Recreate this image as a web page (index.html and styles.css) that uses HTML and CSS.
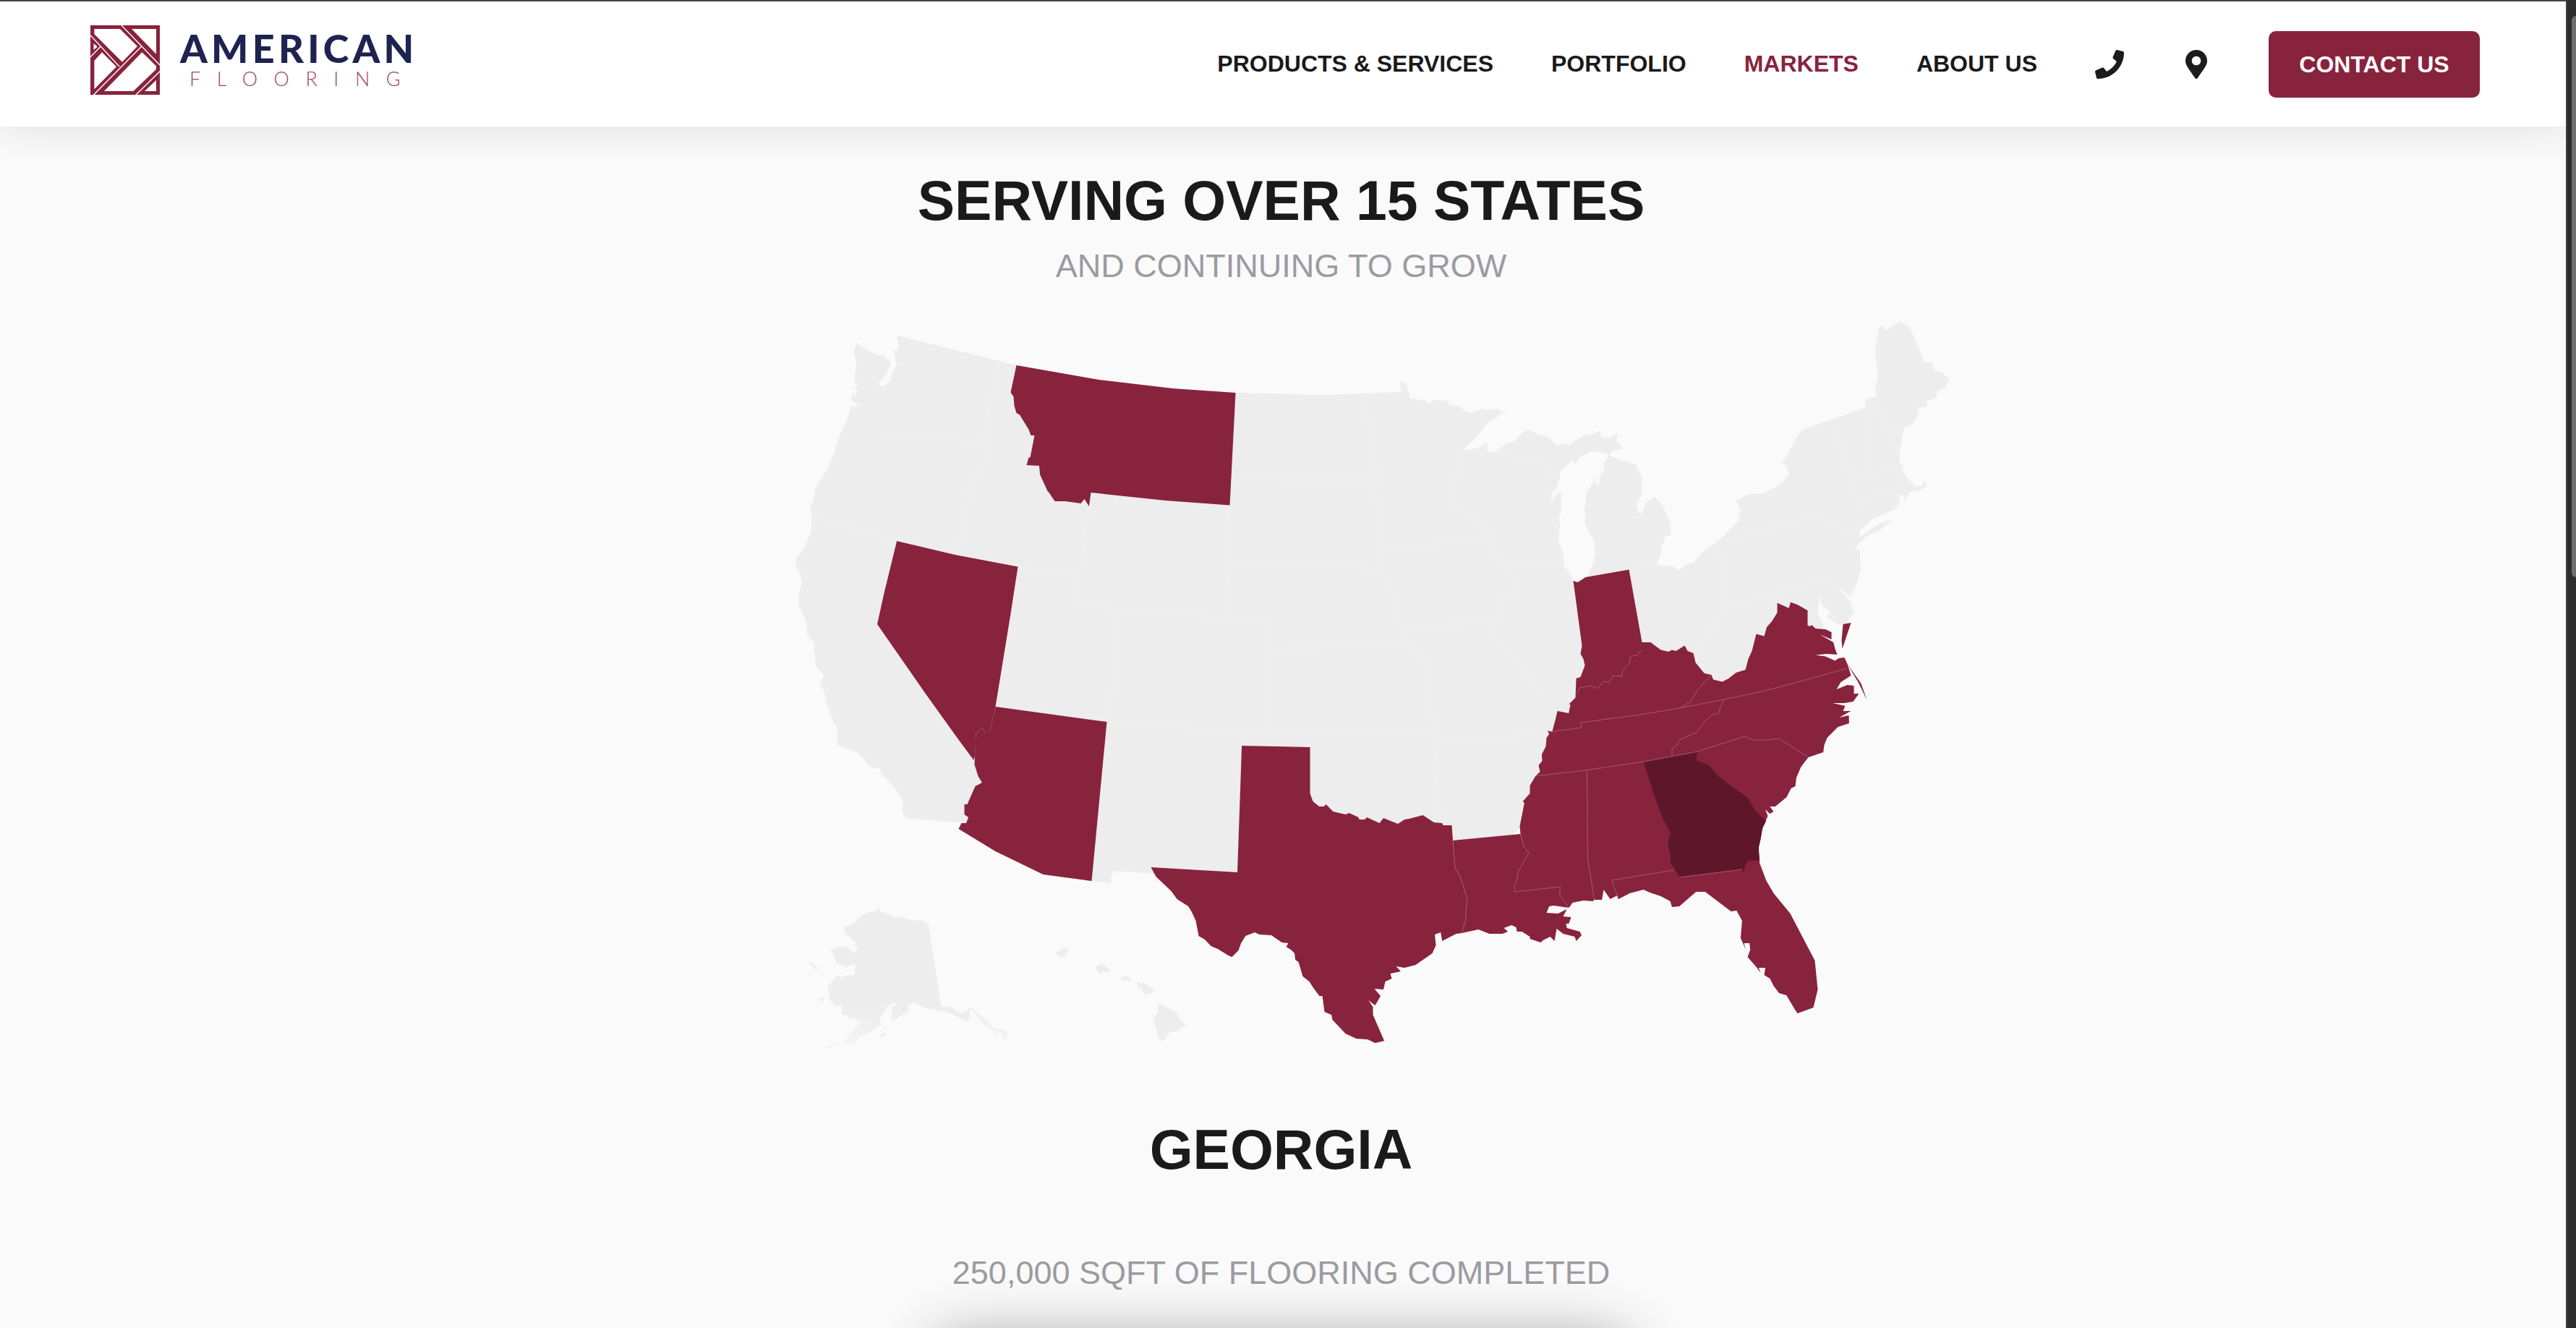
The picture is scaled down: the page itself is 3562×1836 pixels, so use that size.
FILE: index.html
```html
<!DOCTYPE html>
<html lang="en">
<head>
    <meta charset="UTF-8">
    <meta name="viewport" content="width=device-width, initial-scale=1.0">
    <title>American Flooring - Markets</title>
    <link rel="stylesheet" href="styles.css">
</head>
<body>
<div class="window">
    <div class="page">
        <header class="site-header">
            <a class="logo" href="#">
                <svg class="logo-mark" viewBox="0 0 96 96">
                    <rect class="logo-bg" width="96" height="96"/>
                    <polygon class="logo-cut" points="5.4,5 41,5 65,29 44,50.7 5.4,12.3"/>
                    <polygon class="logo-cut" points="57,5 91,5 91,39.7"/>
                    <polygon class="logo-cut" points="4.5,25 9.8,29.7 4.5,34"/>
                    <polygon class="logo-cut" points="5.4,49 16,37.3 36,57.3 5.4,88.3"/>
                    <polygon class="logo-cut" points="71.4,37.3 91,56.3 91,60.7 59.4,91 19,91"/>
                    <polygon class="logo-cut" points="91,75.7 91,91 75,91"/>
                    <path class="logo-line" d="M43 0L96 55M0 13.7L40 57M0 43.7L14.7 28.7M71 28.7L4.6 96M96 63.7L63 96"/>
                </svg>
                <span class="logo-text">
                    <span class="logo-name">AMERICAN</span>
                    <span class="logo-sub">FLOORING</span>
                </span>
            </a>
            <nav class="main-nav">
                <a href="#">PRODUCTS &amp; SERVICES</a>
                <a href="#">PORTFOLIO</a>
                <a class="active" href="#">MARKETS</a>
                <a href="#">ABOUT US</a>
                <a class="nav-icon" href="#" aria-label="Phone">
                    <svg viewBox="0 0 512 512" width="40" height="40"><path d="M493.4 24.6l-104-24c-11.3-2.6-22.9 3.3-27.5 13.9l-48 112c-4.2 9.8-1.4 21.3 6.9 28l60.6 49.6c-36 76.7-98.9 140.5-177.2 177.2l-49.6-60.6c-6.8-8.3-18.2-11.1-28-6.9l-112 48C3.9 366.5-2 378.1.6 389.4l24 104C27.1 504.2 36.7 512 48 512c256.1 0 464-207.5 464-464 0-11.2-7.7-20.9-18.6-23.4z"/></svg>
                </a>
                <a class="nav-icon" href="#" aria-label="Location">
                    <svg viewBox="0 0 384 512" width="30" height="40"><path d="M172.268 501.67C26.97 291.031 0 262.413 0 192 0 85.961 85.961 0 192 0s192 85.961 192 192c0 70.413-26.97 99.031-172.268 309.67-9.535 13.774-29.93 13.773-39.464 0zM192 272c44.183 0 80-35.817 80-80s-35.817-80-80-80-80 35.817-80 80 35.817 80 80 80z"/></svg>
                </a>
                <a class="contact-btn" href="#">CONTACT US</a>
            </nav>
        </header>

        <main class="markets">
            <h1>SERVING OVER 15 STATES</h1>
            <p class="subtitle">AND CONTINUING TO GROW</p>

            <svg class="us-map" viewBox="845.5 440 1852 1040">
                <defs>
                    <linearGradient id="alaska-fade" gradientUnits="userSpaceOnUse" x1="0" y1="1400" x2="0" y2="1462">
                        <stop offset="0" stop-color="#ededed"/>
                        <stop offset="1" stop-color="#f7f7f7"/>
                    </linearGradient>
                </defs>

                <!-- lower 48, lake michigan is a hole -->
                <path class="land" d="M1240 464L1381 499L1405 505L1519 525L1621 537L1708 543L1825 546L1860 545L1936 542L1936 527L1944 530L1950 551L1971 554L1974 558L1986 552L2003 555L2001.5 559L2008 561L2017 561L2022 566L2034 571L2050 565L2053 567L2070 565L2075 569L2084 567L2071 576L2056 585L2041 604L2022 623L2041 620L2056 611L2056 624L2067 625L2084 612L2093 610L2111 593L2123 599L2140 604L2153 616L2159 613L2170 615L2189 602L2200 601L2211 595L2214 605L2223 606L2236 600L2235 611L2241 615L2243 621L2229 623L2225 630L2242 636L2261 642L2270 660L2270 682.5L2263 697L2264 708.5L2270 710L2275 695L2288 687L2298 698L2309 724L2310 741L2303 741L2296 757.5L2296 768L2290 781L2312.5 783L2321 788L2333 780L2341.5 778L2351 766L2373 750L2388 736L2403 720L2406 704L2400 693L2417 683L2439 682L2463 668L2473 656L2470 644L2463 641L2474 623.5L2482.5 606L2492 594L2532 580L2578.5 563.5L2580 551L2594 548.5L2592 537L2597 520L2592 486L2598 452L2603 450L2607 457L2626 445L2640 452L2658 493L2659 500L2671 501L2674.5 512L2685.5 515L2695 523.5L2689 536L2678 541.5L2677 550L2663.5 555L2664.6 562L2653 563.5L2650 577L2643 587L2633 591L2629.5 604L2628 616L2626 627L2627 642L2633 643L2628 648.5L2639 663L2649 673.5L2658 670L2660 663.5L2665 672L2651.5 679L2641.6 680L2633 691.5L2630.6 684L2626 684L2626 697L2617 705.7L2589.5 717L2571 734L2570 743L2598 724L2620 716L2598 734L2581 741L2567.6 754L2565 759L2571 760L2572.5 786L2567.6 804L2564 814.6L2558 825L2537 809L2558 831L2562.6 847L2552 863L2540 863L2525 852L2532 847L2518 836L2515 823.5L2513 848.5L2521 863L2510 900L2450 1000L2150 1090L2110 1140L2050 1180L1800 1230L1596 1208L1542 1204L1537 1208L1535.5 1221L1509 1218L1400 1120L1335.5 1138L1253 1131L1247 1123L1248 1107L1237 1090L1226 1077L1220 1073L1215.6 1063L1205 1061L1198 1057L1195 1050L1186 1041L1157 1030L1157 1003L1153 1002L1144 977L1139 956L1133 944L1139 933.5L1128 921L1125 898.5L1126 890L1115 877L1115 860L1103 836L1105 818L1108.5 806L1105 791L1099 781L1100 773L1112.5 756L1121 734L1122 715L1120 704L1125 690L1126 677L1133 665L1143 650L1153 626L1158.5 607.5L1171 579L1176 562L1182 563L1186.5 561L1195 566L1176 553L1180 541L1181 550L1185 538L1180 536L1187.6 531L1181 530L1183.5 498.6L1180 488L1184 473.6L1200 485L1217 492.5L1221 490L1224 496L1228 497L1231 504.6L1226 516L1213 532.5L1221 533.6L1232 526L1232 516L1239.6 505L1235 483.6L1239.6 485L1242 479ZM2201 623.6L2222 627L2223.6 631L2216.5 641L2217.6 650L2211 659L2212 668L2206.6 672L2205.5 659L2201 670L2192 682.5L2193 691L2190 706L2192 716L2190.7 723.5L2203 747L2205.5 759L2204 775L2194.6 797L2192 798L2181 805L2175 803L2170 791L2163 784L2160.6 762L2155 750L2155 738L2157 725L2155 718L2159 704L2158 691L2160.6 682.5L2153.5 681L2144 694L2145 682.5L2152 674L2159 650L2164 645L2174 636L2177 643L2183.6 632.5Z"/>

                <!-- alaska + hawaii -->
                <path class="alaska" d="M1215.6 1255L1218 1262L1222 1259L1224 1263L1232.5 1264L1235 1268L1246 1268L1264 1273L1274 1272L1283.5 1278L1301 1391L1315 1392L1326 1400L1333 1399L1341.6 1392L1375 1422L1389 1423L1393.7 1431L1389 1440L1381 1425L1379 1433L1374 1425L1361 1417L1353 1408L1340.6 1393L1340.6 1408L1335.5 1412L1312.5 1400L1305 1398L1277 1393L1265 1386L1259 1388L1254 1387L1256.4 1398L1236 1410L1231 1410L1233.5 1391L1243.7 1388L1233.5 1387L1226 1392L1214.6 1410L1219 1416L1205.4 1426L1187.6 1435L1180 1444L1162 1442L1149 1443L1136.5 1450L1126 1453L1113.6 1455L1106 1460L1117 1456L1136 1451L1157 1446L1166 1440L1187.6 1415L1193.7 1411L1185 1412L1182.4 1408L1175 1408L1171 1404L1163 1402L1163.6 1389L1156 1392L1145.7 1382L1147.8 1373L1144 1372L1145 1362L1154 1353L1157 1349L1161 1348L1162 1352L1170 1348L1180 1348L1182.4 1335L1180 1332L1171 1337L1157 1332L1152 1323L1153 1320L1147 1314L1159.5 1309L1170 1308L1180 1317L1187.6 1312L1181.4 1309L1182.4 1303L1170 1292L1165.6 1282L1178 1278L1191.6 1265L1203 1260L1209 1261ZM1120 1329L1131.4 1339L1127 1341L1122 1335L1119 1334ZM1130 1380L1139 1380L1136 1386ZM1213 1437L1221 1427L1227 1429L1213 1440ZM1222 1419L1227 1420L1221 1424Z"/>
                <path class="land" d="M1459.5 1317L1473 1310L1477 1313L1471 1323L1463 1322ZM1514 1337L1523 1331L1533 1340L1534.5 1345L1523 1343L1520 1347ZM1551 1350L1560 1350L1564 1356L1549 1355ZM1572 1357L1585.5 1361L1597 1370L1585.5 1375L1579 1373L1578 1367L1572 1366ZM1561 1362L1563.6 1362L1562.6 1368ZM1600 1388L1605 1388L1629 1402L1630 1408L1640 1417L1628 1425L1616 1428L1608.5 1440L1601 1435L1598 1422L1594 1408L1601 1400Z"/>

                <!-- state borders on the grey part -->
                <path class="land-line" d="M1215.6 597L1244 602L1300 602L1358.5 615M1381 499L1358.5 615L1365 623.5L1358.5 645L1337 678L1340.6 688L1323 766M1122 715L1239.6 748M1407 783.5L1491 797M1505.4 700L1491 797L1487.6 836L1547 843L1534.5 980L1530 998M1547 843L1694 854L1751 856M1700 698.5L1694 854M1702 662L1860 664L1905.5 663M1698 777L1860 780L1879 783.5L1909 790M1751 856L1749 1013L1718 1012L1530 998M1751 897L1950 893M1718 1012L1716.6 1031M1749 1013L1980 1008L1981 1028L2117.6 1015M1980 1008L1992.6 1140M1885 545L1905.5 663L1898 673.5L1906.6 706L1912 757.5L1909 790L1926 822L1937 868L1950.5 893L1976.8 923.5L1980 1008M1912 757.5L2060 747M2022 623L2019 648.5L2007 663L2012.5 702L2038 714.6L2056 730L2060 747L2066 768L2079 782.5L2098.6 802L2090 822L2075 829L2074 848.5L2064 863L2068 884L2093 909L2107 927L2127 958M1937 868L2063 859M2079 782.5L2161.7 773.5M2068 625L2140 643L2145 663M2194.6 797L2290.6 780M2373 750L2384 798.5L2381 845M2397.5 745L2516.6 711L2532 727L2565 736M2384 839.6L2527.5 800M2532 580.7L2561 664.6L2573 709M2578.5 563.5L2583 655.7M2589.5 552L2625 623.5M2561 664.6L2625 643M2563.7 693L2625 673.5M2381 845L2353.6 888L2344 916"/>

                <!-- highlighted states -->
                <polygon class="state" points="1405,505 1519,525 1621,537 1708,543 1700,698.5 1611,692 1508,681 1505.4,700 1499,690 1494,696 1473,693 1458,693 1450,681 1448,679 1437.5,656 1436.5,644 1419,643 1422,632.5 1424,632.5 1430,602 1425,602 1422,594 1409.5,573.5 1405,571 1402,561 1401,548.6 1397,542.5"/>
                <polygon class="state" points="1239.6,748 1320,767 1407,783.5 1397,848.5 1376,977 1368,1013 1362.5,1013 1357.5,1007 1349,1014 1348,1043 1346,1051 1323,1020 1280,960 1212.5,863 1222,820"/>
                <polygon class="state" points="1376,977 1530,998 1509,1218 1442,1209 1376,1177 1325,1146 1329,1138 1335.5,1138 1338.6,1130 1333,1126 1333,1112 1337,1112 1348,1087 1357.5,1082 1352,1073 1347,1057 1349,1014 1357.5,1007 1362.5,1013 1368,1013"/>
                <polygon class="state" points="1716.6,1031 1811,1033 1811,1097 1815,1108 1823.7,1115 1830,1115 1833,1112 1843,1122 1860,1126 1865,1124 1878,1130 1879,1133 1886.5,1133 1889.6,1130 1907,1138 1912.5,1131 1932.5,1139 1941.6,1133 1948,1132 1967,1127 1982.4,1137 1993.7,1138 1995,1141 2007,1141 2008.5,1162 2011.5,1200 2019,1213 2028,1242 2026,1272 2021,1290 2013,1291 1993.7,1301 1991.6,1289 1983.5,1292 1985,1307 1980,1318 1957,1334 1941.6,1338 1930,1336 1936.5,1343 1922,1346 1924,1353 1915,1357 1912.5,1368 1900,1367 1908.5,1377 1901,1390 1891.6,1383 1898,1392 1898,1403 1913.6,1439 1901,1442 1890.6,1437 1875,1436 1860,1429 1842,1410 1840.6,1403 1831,1399 1828,1377 1824,1377 1815,1365 1810,1357 1801,1350 1795,1330 1790.6,1327 1789.6,1318 1784.5,1313 1778,1309 1781,1304 1772,1303 1757.5,1293 1741,1292 1734.5,1289 1721.7,1294 1715.6,1304 1712,1314 1703,1323 1698,1321 1683.5,1312 1674,1308 1665.6,1299 1657,1294 1653,1273 1647,1260 1642.6,1253 1627,1243 1619,1232 1598,1212 1591,1199 1710.5,1206"/>

                <!-- south east block: IN KY VA NC SC TN MS AL LA FL -->
                <polygon class="state" points="2175,803 2181,805 2192,798 2252,787.5 2270,888 2282,888 2296,898.5 2307,901 2311,898.5 2317,900 2329,892.5 2333,900 2341,903 2344,916 2356,930.7 2366,933 2368.5,939.6 2381,942.5 2389,938.5 2400,930 2413,926 2417,911 2422,900 2428,876.4 2439,879.6 2442.5,867 2449.6,859 2457,847 2457,833.5 2473,840.7 2475.5,832.5 2485,836 2499,844 2499,864.6 2502,866 2504.5,864 2510,869 2523.7,870 2532,874 2532,884 2515.5,877 2534.6,888 2537,897 2540,905 2525,904 2510,905.7 2523.7,907.4 2537,913.5 2542,910 2550,909 2554,918 2559,934 2545,943 2539,953 2554,947 2563,948 2563,959 2570,959 2562,970 2550,972 2533.6,972 2551,976 2548,983 2559,983 2542.6,992 2556,989 2556.4,1000 2541,1005 2526,1020 2522,1030 2520.7,1040 2500,1047 2490,1060 2483.5,1075 2482,1087 2476,1090 2470,1102 2454.4,1115 2446.7,1115 2452,1122 2446.7,1125 2440.6,1119 2444,1128 2436.6,1145 2434,1160 2431,1172 2432.6,1193 2441.6,1217 2452,1235 2475,1263 2509,1328 2513,1368 2507,1393 2485,1401 2481,1395 2469.7,1376 2459.5,1373 2452,1363 2447,1353 2439,1348 2440.6,1338 2431.4,1338 2434,1345 2429,1338 2416,1323 2419.7,1313 2418.6,1304 2411,1304 2413.6,1313 2406.4,1297 2408.4,1273 2400.8,1259 2393,1260 2357.4,1233 2344.7,1233 2321.7,1253 2311.5,1254 2309,1246 2296,1239 2281,1234 2272,1230 2253,1235 2237.5,1243 2236,1238 2226,1243 2217,1230 2214.6,1244 2204,1244 2202,1246 2189,1245 2174,1248 2169,1255 2148,1252 2141.6,1253 2138,1262 2154,1263 2166,1257 2161,1267 2172,1268 2168.7,1277 2165,1277 2166,1283 2184,1288 2186.5,1293 2179,1301 2177,1295 2161,1291 2152,1284 2149,1301 2143,1295 2133,1300 2130,1303 2115,1298 2115,1295 2104,1288 2097,1288 2096,1282 2089.6,1279 2079,1283 2084.5,1288 2077,1291 2059,1291 2043.7,1285 2021,1290 2026,1272 2028,1242 2019,1213 2011.5,1200 2008.5,1162 2102,1153 2101,1142 2107.4,1110 2105,1108 2115,1097 2115,1086 2122.7,1073 2129,1067 2127,1058 2132,1052 2131.4,1043 2137,1032 2138,1020 2141.6,1015 2139.6,1010 2145.7,1012 2151,992 2153,983 2168.7,986 2171,974 2169,973.5 2178,964.6 2179,938 2185,936 2191,920 2189,911 2185,904 2187,893"/>
                <polygon class="state" points="2554,918 2573,945 2581,968 2570,945"/>
                <polygon class="state" points="2548,863 2559,861 2547,897 2546,885"/>
                <polygon class="state state-active" points="2272,1053 2347,1039 2344.7,1051 2362.5,1058 2375,1073 2416,1103 2426,1120 2441.6,1135 2436.6,1145 2434,1160 2431.4,1172 2432.6,1190 2417,1190 2412.5,1197 2411,1207 2408.5,1202 2321.7,1213 2310,1193 2309,1180 2305.4,1170 2308,1155 2310.5,1153 2298,1130 2286,1097"/>

                <path class="state-line" d="M2270 898.5L2263 906L2254 907.4L2253 916L2243 928L2242 935L2230 934L2225 943L2216.5 942.5L2209 952L2200 948L2183.6 951L2180 959M2143 1012L2186.5 1006L2185.5 999L2268 988L2322 979L2383 967L2436 956L2485 943L2554 924M2366 933L2348 952L2337 970L2322 979M2383 967L2375 987L2369 987L2357 997L2345 1013L2332 1018L2322 1023L2319 1030L2311.5 1035L2311.5 1046M2122.7 1073L2191.6 1065L2272 1053L2347 1039L2412 1018L2424 1023L2444 1023L2459.5 1021L2500 1047M2191.6 1065L2194 1067L2195 1187L2204 1244M2102 1153L2106.4 1170L2113.6 1179L2098.8 1205L2097 1218L2093.7 1223L2093.7 1233L2157 1226L2156 1237L2169 1255M2228 1217L2314 1203M2228 1217L2237.5 1243M2321.7 1213L2408.5 1202M2008.5 1162L2011.5 1200L2019 1213L2028 1242L2026 1272L2021 1290"/>
            </svg>

            <h2>GEORGIA</h2>
            <p class="stat">250,000 SQFT OF FLOORING COMPLETED</p>
            <div class="project-card"></div>
        </main>
    </div>
    <div class="scrollbar"><div class="scrollbar-thumb"></div></div>
</div>
</body>
</html>
```

FILE: styles.css
```css
html, body {
    margin: 0;
    height: 1836px;
    overflow: hidden;
}
body {
    font-family: "Liberation Sans", Arial, sans-serif;
    background-color: #fafafa;
}
a {
    color: inherit;
    text-decoration: none;
}

.window {
    display: flex;
    height: 1836px;
}
.page {
    flex: 1;
    min-width: 0;
    height: 1836px;
    overflow: hidden;
}
.scrollbar {
    width: 14px;
    box-sizing: border-box;
    background-color: #2d2d2d;
    border-left: 2px solid #3f3f3f;
    padding: 22px 0 0 6px;
}
.scrollbar-thumb {
    height: 776px;
    background-color: #6e6e6e;
    border-radius: 6px 0 0 6px;
}

/* header */
.site-header {
    position: relative;
    display: flex;
    justify-content: space-between;
    align-items: center;
    box-sizing: border-box;
    height: 175px;
    padding: 0 119px 0 125px;
    background-color: #fff;
    border-top: 2px solid #444;
    box-shadow: 0 0 60px rgba(0, 0, 0, 0.12);
}
.logo {
    display: flex;
    align-items: center;
    gap: 28px;
    margin-bottom: 12px;
}
.logo-mark {
    display: block;
    width: 96px;
    height: 96px;
}
.logo-bg {
    fill: #88233d;
}
.logo-cut {
    fill: #fff;
}
.logo-line {
    fill: none;
    stroke: #fff;
    stroke-width: 1.4;
}
.logo-text {
    display: flex;
    flex-direction: column;
}
.logo-name {
    font-family: Lato, sans-serif;
    font-weight: 900;
    font-size: 54px;
    line-height: 48px;
    letter-spacing: 5.2px;
    color: #1f2350;
}
.logo-sub {
    font-family: Lato, sans-serif;
    font-weight: 300;
    font-size: 27px;
    line-height: 28px;
    letter-spacing: 22.5px;
    margin: 4px 0 0 13px;
    color: #a0455c;
}
.main-nav {
    display: flex;
    align-items: center;
    gap: 80px;
    font-size: 32px;
    font-weight: 700;
    color: #1a1a1a;
}
.main-nav .active {
    color: #88233d;
}
.nav-icon {
    display: flex;
    justify-content: center;
    width: 40px;
}
.nav-icon svg {
    display: block;
    fill: #1c1c1c;
}
.contact-btn {
    width: 292px;
    line-height: 92px;
    text-align: center;
    color: #fff;
    background-color: #88233d;
    border-radius: 10px;
}

/* markets */
.markets {
    padding-right: 5px;
    text-align: center;
}
h1 {
    margin: 0;
    padding-top: 54px;
    font-size: 77px;
    line-height: 96px;
    font-weight: 700;
    color: #1a1a1a;
}
.subtitle {
    margin: 15px 0 0;
    font-size: 45px;
    line-height: 56px;
    color: #9b9ba1;
}
.us-map {
    display: block;
    width: 1852px;
    height: 1040px;
    margin: 44px auto 0;
}
.land {
    fill: #ededed;
    fill-rule: evenodd;
}
.alaska {
    fill: url(#alaska-fade);
}
.land-line {
    fill: none;
    stroke: #f1f1f1;
    stroke-width: 1;
}
.state {
    fill: #88233d;
}
.state-active {
    fill: #5e172a;
}
.state-line {
    fill: none;
    stroke: #a9576c;
    stroke-width: 1;
}
h2 {
    margin: 61px 0 0;
    font-size: 77px;
    line-height: 96px;
    font-weight: 700;
    color: #1a1a1a;
}
.stat {
    margin: 95px 0 0;
    font-size: 45px;
    line-height: 56px;
    color: #9b9ba1;
}
.project-card {
    width: 950px;
    height: 400px;
    margin: 70px auto 0;
    background-color: #fff;
    box-shadow: 0 0 80px rgba(0, 0, 0, 0.45);
}
```
